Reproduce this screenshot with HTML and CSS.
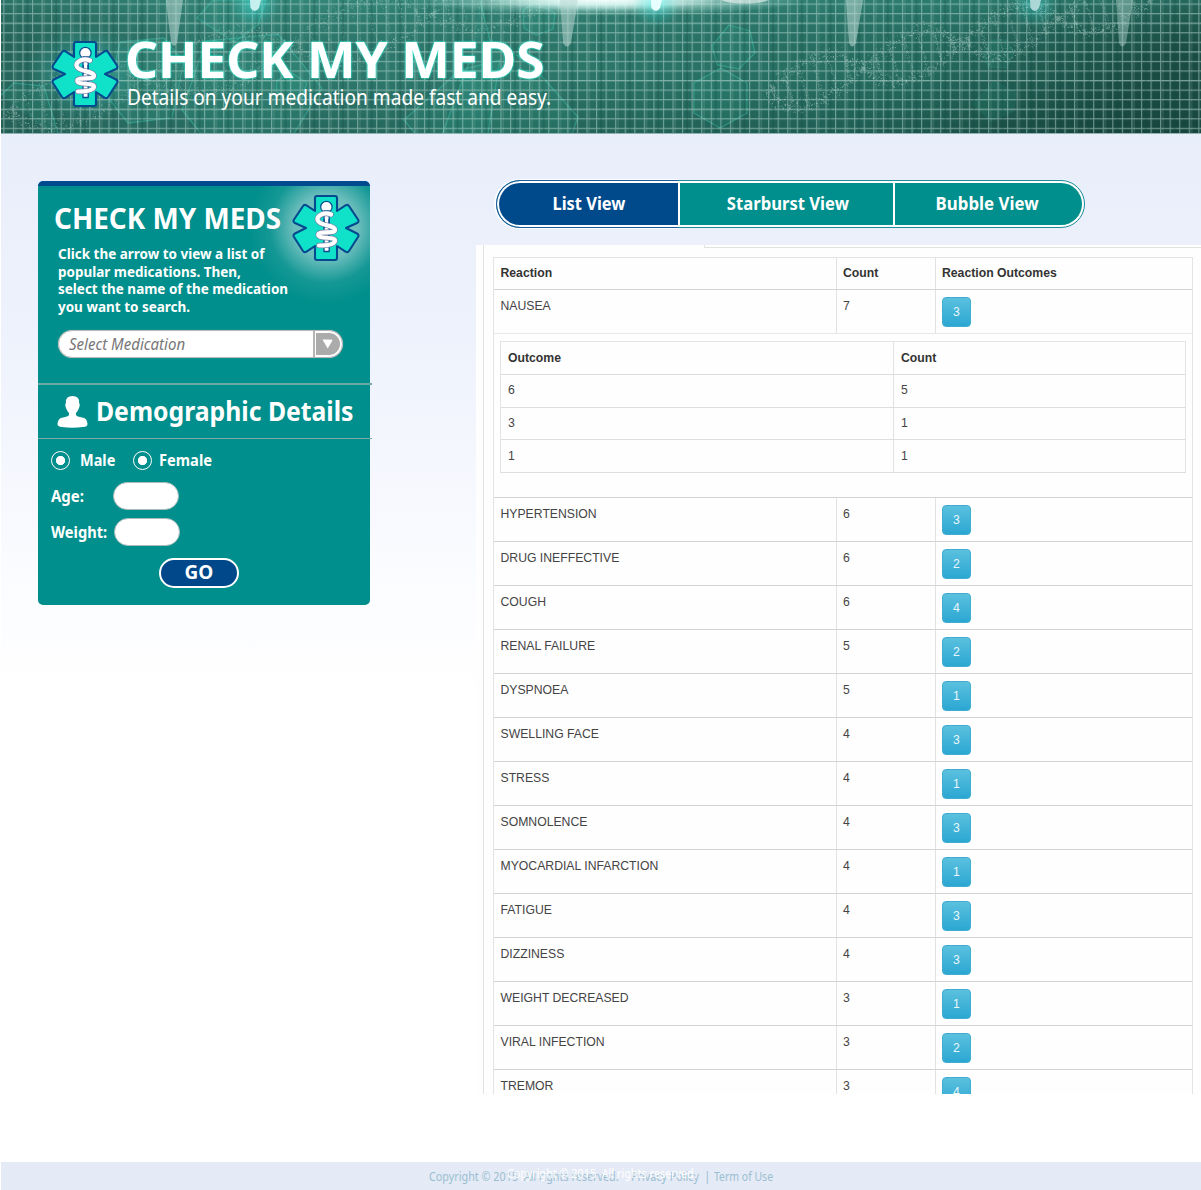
FILE: index.html
```html
<!DOCTYPE html>
<html lang="en">
<head>
<meta charset="utf-8">
<title>Check My Meds</title>
<link rel="stylesheet" href="styles.css">
</head>
<body>
<svg class="defs" width="0" height="0" aria-hidden="true">
  <symbol id="star" viewBox="0 0 68 68">
    <path d="M25 2H43Q45 2 45 4V17L53.5 11.3Q55.8 10 57.2 12.3L66 25.5Q67.3 27.8 65 29L54 34L65 39.5Q67.3 40.8 66 43L57.2 56.7Q55.8 59 53.5 57.7L45 52V64Q45 66 43 66H25Q23 66 23 64V52L14.500 57.7Q12.200 59 10.800 56.7L2 43Q.7 40.800 3 39.500L14 34L3 29Q.7 27.800 2 25.500L10.800 12.300Q12.200 10 14.500 11.300L23 17V4Q23 2 25 2Z" fill="#10e2c9" stroke="#034a8e" stroke-width="2.1" stroke-linejoin="round"/>
    <circle cx="34.400" cy="13" r="5.700" fill="#fff" stroke="#0b4c91" stroke-width="1.200"/>
    <path d="M32 17H37.200V57.500H32Z" fill="#fff" stroke="#0b4c91" stroke-width="1.300"/>
    <path d="M39 20.500C32 17.500 24 22 25.800 26.500C28 32 43.500 31 43 36C42.600 40.500 26 36 26.300 41C26.800 45 43 42.500 43 46.500C43 51 33 51.500 27 51.500" fill="none" stroke="#7480a8" stroke-width="5.600" stroke-linecap="round"/>
    <path d="M32.300 25V34M36.900 25V34M32.300 41V45M36.900 41V45" stroke="#0b4c91" stroke-width="1" fill="none"/>
    <path d="M39 20.500C32 17.500 24 22 25.800 26.500C28 32 43.500 31 43 36C42.600 40.500 26 36 26.300 41C26.800 45 43 42.500 43 46.500C43 51 33 51.500 27 51.500" fill="none" stroke="#fff" stroke-width="4.200" stroke-linecap="round"/>
  </symbol>
</svg>

<header class="banner">
  <svg class="banner-art" width="1200" height="134" viewBox="1 0 1200 134" aria-hidden="true">
    <defs>
      <linearGradient id="base" x1="0" x2="1" y1="0" y2=".1">
        <stop offset="0" stop-color="#245f56"/><stop offset=".2" stop-color="#2f7a6f"/><stop offset=".5" stop-color="#2d776b"/><stop offset=".8" stop-color="#256b60"/><stop offset="1" stop-color="#1a4c44"/>
      </linearGradient>
      <linearGradient id="shade" x1="0" x2="0" y1="0" y2="1">
        <stop offset="0" stop-color="#3fa090" stop-opacity=".3"/><stop offset=".5" stop-color="#164a42" stop-opacity="0"/><stop offset="1" stop-color="#0d302b" stop-opacity=".25"/>
      </linearGradient>
      <radialGradient id="glow"><stop offset="0" stop-color="#59ffff" stop-opacity=".5"/><stop offset="1" stop-color="#2fd5c8" stop-opacity="0"/></radialGradient>
      <radialGradient id="white"><stop offset="0" stop-color="#fff"/><stop offset=".45" stop-color="#e8fffb" stop-opacity=".7"/><stop offset="1" stop-color="#c8fff4" stop-opacity="0"/></radialGradient>
      <pattern id="mesh" width="9.560" height="9.560" patternUnits="userSpaceOnUse" x="3.300" y="3.500">
        <path d="M0 .6H9.560M.6 0V9.560" stroke="#b4d6cf" stroke-opacity=".55" stroke-width="1.100"/>
      </pattern>
      <pattern id="mesh2" width="28.680" height="28.680" patternUnits="userSpaceOnUse" x="14.500" y="22.500">
        <path d="M0 1H28.680M1.200 0V28.680" stroke="#c8e2dc" stroke-opacity=".2"/>
        <path d="M13 0V28.680" stroke="#0d473f" stroke-opacity=".25" stroke-width="2"/>
      </pattern>
    </defs>
    <rect x="1" width="1200" height="134" fill="url(#base)"/>
    <rect x="1" width="1200" height="134" fill="url(#shade)"/>
    <ellipse cx="85" cy="72" rx="58" ry="48" fill="url(#glow)" opacity=".7"/>
    <g fill="#3ad0b4" fill-opacity=".09" stroke="#45cfb8" stroke-opacity=".38" stroke-width="1.300">
      <path d="M120 42L164 38L184 62L172 118L128 123L108 98Z"/>
      <path d="M206 41L278 34L322 88L290 140H206L182 110Z"/>
      <path d="M197 18L213 0H266L258 25L234 42Z"/>
      <path d="M277 80L292 73L307 83L302 98L285 99L276 91Z"/>
      <path d="M480 0L490 40L530 63L578 117L570 140H440L470 60"/>
      <path d="M404 120L460 70L500 60L487 140H420Z"/>
      <path d="M1 95L14 83L44 86L60 140"/>
      <path d="M523 10L535 2L555 13L553 29L536 35L524 28Z"/>
      <path d="M729 25L750 31L755 53L739 69L717 65L712 46Z"/>
      <path d="M721 68L747 83V113L720 128L694 113V83Z"/>
      <path d="M991 40H1007L1014 53L1006 68L988 67L983 54Z" stroke-opacity=".1"/>
      <path d="M994 80L1017 93L1014 112L990 122L972 104Z" stroke-opacity="0"/>
    </g>
    <rect x="1" width="1200" height="134" fill="url(#mesh)"/>
    <rect x="1" width="1200" height="134" fill="url(#mesh2)"/>
    <path class="dna" fill="#cfe9e2" fill-opacity=".42"/>
    <ellipse cx="610" cy="-1" rx="200" ry="17" fill="url(#white)" opacity=".8"/>
    <ellipse cx="600" cy="-2" rx="120" ry="13" fill="url(#white)"/>
    <ellipse cx="745" cy="-1" rx="24" ry="4.500" fill="#fff" opacity=".55"/>
    <g fill="#bad9d3" fill-opacity=".55">
      <path d="M166 0H183L177 43Q174 49 171 43Z"/>
      <path d="M560 0H578L571 43Q567 50 563 43Z"/>
      <path d="M846 0H863L856 43Q852 50 849 43Z"/>
      <path d="M1116 0H1133L1126 43Q1122 50 1119 43Z" fill-opacity=".4"/>
    </g>
    <g>
      <ellipse cx="255" cy="3" rx="24" ry="25" fill="url(#glow)"/>
      <ellipse cx="656" cy="3" rx="24" ry="25" fill="url(#glow)"/>
      <ellipse cx="1035" cy="3" rx="24" ry="25" fill="url(#glow)" opacity=".7"/>
      <path d="M250 0H261L259 8Q255 14 250.500 8Z" fill="#c6f0ee"/>
      <path d="M651 0H662L660 8Q656 14 651.500 8Z" fill="#e8ffff"/>
      <path d="M1030 0H1041L1039 8Q1035 14 1030.500 8Z" fill="#abd8d6"/>
    </g>
    <rect x="1" y="133" width="1200" height="1" fill="#8fb3ae"/>
  </svg>
  <div class="brand">
    <svg class="brand-star" width="68" height="68"><use href="#star"/></svg>
    <div class="brand-text">
      <h1>CHECK MY MEDS</h1>
      <p>Details on your medication made fast and easy.</p>
    </div>
  </div>
</header>

<main class="page">
  <aside class="search">
    <section class="pick">
      <svg class="pick-star" width="68" height="68"><use href="#star"/></svg>
      <h2>CHECK MY MEDS</h2>
      <p>Click the arrow to view a list of<br>popular medications. Then,<br>select the name of the medication<br>you want to search.</p>
      <div class="select">
        <span>Select Medication</span>
        <b class="arrow"><svg width="12" height="9" viewBox="0 0 12 9"><path d="M1 .5H10.500L5.750 8.500Z" fill="#fff"/></svg></b>
      </div>
    </section>
    <section class="demo">
      <svg width="31" height="33" viewBox="0 0 31 33"><path d="M9 8Q8 1.500 15.500 1Q23 1.500 22 8Q23.500 9 22 13Q20.500 17 19 18Q18.500 21 21 21.500L27 23Q30 24 30.500 29Q30.500 32 26 32Q15 33.500 5 32Q.5 31.500 .5 29Q1 24 4 23L10 21.500Q12.500 21 12 18Q10.500 17 9 13Q7.500 9 9 8Z" fill="#fff"/></svg>
      <h3>Demographic Details</h3>
    </section>
    <section class="form">
      <div class="line radios">
        <i class="radio"></i><span class="male">Male</span>
        <i class="radio"></i><span class="female">Female</span>
      </div>
      <div class="line"><span class="lab age">Age:</span><i class="box"></i></div>
      <div class="line"><span class="lab weight">Weight:</span><i class="box shift"></i></div>
      <div class="go">GO</div>
    </section>
  </aside>

  <div class="results">
    <nav class="tabs">
      <a class="tab on"><span>List View</span></a>
      <a class="tab mid"><span>Starburst View</span></a>
      <a class="tab last"><span>Bubble View</span></a>
    </nav>
    <div class="sheet">
      <div class="stub"></div>
      <div class="frame">
        <div class="table">
          <div class="row head"><span>Reaction</span><span>Count</span><span>Reaction Outcomes</span></div>
          <div class="row soft"><span>NAUSEA</span><span>7</span><span><b class="btn">3</b></span></div>
          <div class="nest">
            <div class="inner">
              <div class="irow head"><span>Outcome</span><span>Count</span></div>
              <div class="irow"><span>6</span><span>5</span></div>
              <div class="irow"><span>3</span><span>1</span></div>
              <div class="irow"><span>1</span><span>1</span></div>
            </div>
          </div>
          <div class="row"><span>HYPERTENSION</span><span>6</span><span><b class="btn">3</b></span></div>
          <div class="row"><span>DRUG INEFFECTIVE</span><span>6</span><span><b class="btn">2</b></span></div>
          <div class="row"><span>COUGH</span><span>6</span><span><b class="btn">4</b></span></div>
          <div class="row"><span>RENAL FAILURE</span><span>5</span><span><b class="btn">2</b></span></div>
          <div class="row"><span>DYSPNOEA</span><span>5</span><span><b class="btn">1</b></span></div>
          <div class="row"><span>SWELLING FACE</span><span>4</span><span><b class="btn">3</b></span></div>
          <div class="row"><span>STRESS</span><span>4</span><span><b class="btn">1</b></span></div>
          <div class="row"><span>SOMNOLENCE</span><span>4</span><span><b class="btn">3</b></span></div>
          <div class="row"><span>MYOCARDIAL INFARCTION</span><span>4</span><span><b class="btn">1</b></span></div>
          <div class="row"><span>FATIGUE</span><span>4</span><span><b class="btn">3</b></span></div>
          <div class="row"><span>DIZZINESS</span><span>4</span><span><b class="btn">3</b></span></div>
          <div class="row"><span>WEIGHT DECREASED</span><span>3</span><span><b class="btn">1</b></span></div>
          <div class="row"><span>VIRAL INFECTION</span><span>3</span><span><b class="btn">2</b></span></div>
          <div class="row"><span>TREMOR</span><span>3</span><span><b class="btn">4</b></span></div>
        </div>
      </div>
    </div>
  </div>
</main>

<footer class="foot">
  <div class="links"><span class="copy">Copyright © 2015&nbsp; All rights reserved.</span><span class="policy">Privacy Policy</span><span class="bar">|</span><span class="term">Term of Use</span></div>
  <div class="over"><span class="copy">Copyright © 2015&nbsp; All rights reserved.</span></div>
</footer>
<script src="dna.js"></script>
</body>
</html>
```
FILE: dna.js
```js
// Scatters small particles along two double-helix strands in the banner.
(function () {
  var seed = 7;
  function rnd() { seed = (seed * 16807) % 2147483647; return seed / 2147483647; }
  var d = '';
  function dot(x, y, s) { d += 'M' + x.toFixed(1) + ' ' + y.toFixed(1) + 'h' + s + 'v' + s + 'h-' + s + 'z'; }
  function helix(x0, x1, y0, slope, period, amp, step, rung) {
    for (var x = x0; x < x1; x += step) {
      var mid = y0 + slope * (x - x0);
      var off = Math.sin((x - x0) / period * Math.PI) * amp;
      for (var s = -1; s < 2; s += 2) {
        var spread = (rnd() + rnd() + rnd() - 1.5) * 7;
        dot(x + (rnd() - 0.5) * 5 + s * off * -0.25, mid + s * off + spread, rnd() < 0.25 ? 1.2 : 0.8);
      }
    }
    for (var r = x0 + 8; r < x1; r += 15) {
      var o = Math.abs(Math.sin((r - x0) / period * Math.PI) * amp);
      for (var t = -1; t < 1; t += rung) {
        dot(r + t * o * 0.28 + (rnd() - 0.5) * 3.5, y0 + slope * (r - x0) + t * o + (rnd() - 0.5) * 3, 0.7);
      }
    }
  }
  helix(765, 1155, 93, -0.255, 98, 25, 0.5, 0.028);
  helix(5, 560, 112, -0.23, 142, 30, 0.85, 0.07);
  document.querySelector('.dna').setAttribute('d', d);
})();
```
FILE: styles.css
```css
* { box-sizing: border-box; }
body { margin: 0; width: 1201px; height: 1190px; overflow: hidden; display: flex; flex-direction: column; background: #fff; font-family: "Noto Sans", sans-serif; color: #fff; }
h1, h2, h3, p { margin: 0; }
.defs { position: absolute; }
h1, h2, h3, .brand p, .pick p, .select span, .radios span, .lab, .tab span, .foot span { display: inline-block; white-space: nowrap; transform-origin: 0 50%; }

.banner { position: relative; height: 134px; margin-left: 1px; }
.banner-art { position: absolute; left: 0; top: 0; display: block; }
.brand { position: relative; display: flex; padding: 40px 0 0 50px; }
.brand-text { display: flex; flex-direction: column; align-items: flex-start; padding-left: 8px; margin-top: -10px; }
h1 { font-size: 50px; line-height: 58px; font-weight: 700; transform: scaleX(1.03); margin-left: -2px; text-shadow: 0 0 2px #35eed6, 0 0 2px #35eed6; }
.brand p { font-size: 22px; line-height: 26px; transform: scaleX(.868); margin-top: -5px; }

.page { height: 1028px; margin-left: 1px; display: flex; background: linear-gradient(#e8eefa, #eef2fc 200px, #fbfcff 450px, #fff 565px); }
.search { width: 332px; height: 424px; margin: 47px 0 0 37px; border-radius: 5px; background: #008f8c; border-top: 5px solid #004a8f; }
.pick { position: relative; height: 197px; padding: 15px 0 0 20px; background: radial-gradient(circle at 288px 41px, rgba(255,255,255,.5) 0, rgba(255,255,255,.42) 32px, rgba(255,255,255,.08) 56px, transparent 78px); }
.pick-star { position: absolute; left: 254px; top: 8px; }
h2 { font-size: 28px; line-height: 34px; transform: scaleX(.995); margin-left: -4px; }
.pick > p { font-size: 14px; line-height: 17.7px; font-weight: 700; transform: scaleX(.963); margin-top: 10px; }
.select { width: 285px; height: 28px; margin-top: 13px; border: 1px solid #b5b5b5; border-radius: 14px; background: #fff; display: flex; justify-content: space-between; padding-left: 10px; box-shadow: 0 0 1px #bbb; }
.select span { font-size: 16px; line-height: 26px; font-style: italic; color: #777; transform: scaleX(.938); }
.arrow { width: 29px; border-left: 2px solid #b5b5b5; padding: 2px 2px 2px 1px; display: flex; }
.arrow svg { width: 100%; height: 22px; padding: 6px 5px; background: #ababab; border-radius: 0 11px 11px 0; }
.demo { height: 56px; border-top: 2px solid #6ca8a5; border-bottom: 1px solid #7ba9a6; display: flex; padding: 10px 0 0 19px; width: 334px; }
.demo h3 { font-size: 26px; line-height: 34px; transform: scaleX(.952); margin: -1px 0 0 8px; }
.form { padding: 3px 0 0 13px; display: flex; flex-direction: column; }
.line { height: 36px; display: flex; align-items: center; font-size: 15.5px; font-weight: 700; }
.radio { width: 19px; height: 19px; border: 1.5px solid #fff; border-radius: 50%; background: radial-gradient(circle, #fff 4.3px, transparent 5px); }
.male { width: 53px; margin-left: 10px; transform: scaleX(.935); }
.female { margin-left: 7px; transform: scaleX(.946); }
.lab { width: 62px; }
.age { transform: scaleX(.965); }
.weight { transform: scaleX(.943); }
.box { width: 66px; height: 28px; background: #fff; border: 1px solid #a8bcbc; border-radius: 14px; }
.shift { margin-left: 1px; }
.go { width: 80px; height: 30px; margin: 8px 0 0 108px; border: 2px solid #fff; border-radius: 15px; background: #00488a; text-align: center; font-size: 19px; line-height: 25px; font-weight: 700; }

.results { width: 725px; margin: 46px 0 0 106px; display: flex; flex-direction: column; }
.tabs { width: 589px; height: 48px; margin-left: 20px; border: 1px solid #1d8d9a; border-radius: 24px; padding: 2px; display: flex; gap: 2px; background: #fff; }
.tab { display: flex; align-items: center; justify-content: center; height: 42px; background: #008f8c; }
.tab span { font-size: 18px; line-height: 40px; margin-top: -2px; font-weight: 700; transform-origin: 50% 50%; }
.on { position: relative; width: 179px; border-radius: 21px 0 0 21px; background: #004a8c; }
.on::before { content: ""; position: absolute; inset: -3px 0 -3px -3px; border: 1px solid #1a5b9a; border-right: 0; border-radius: 24px 0 0 24px; box-shadow: -1px 0 0 1px rgba(255,255,255,.85); clip-path: inset(-3px 0 -3px -3px); }
.on span { transform: scaleX(.914); }
.mid { width: 213px; }
.mid span { transform: scaleX(.924); padding-left: 4px; }
.last { flex: 1; border-radius: 0 21px 21px 0; }
.last span { transform: scaleX(.936); padding-right: 3px; }

.sheet { height: 849px; margin-top: 17px; overflow: hidden; background: #fefefe; color: #444; font: 12.22px/16px "Liberation Sans", sans-serif; }
.stub { height: 3px; margin-left: 228px; border: solid #e2e2e2; border-width: 0 0 1px 1px; }
.frame { margin: -3px 0 0 7px; border-left: 1px solid #e2e2e2; padding: 12px 0 0 9px; }
.table { width: 700px; border: 1px solid #e4e4e4; }
.row { height: 44px; display: grid; grid-template-columns: 342px 99px 1fr; border-bottom: 1px solid #d4d4d4; }
.row > span { padding: 8px 6px 0 6.5px; }
.row > span + span { border-left: 1px solid #e2e2e2; padding-left: 6px; }
.row.head { height: 32px; }
.row.soft { border-color: #e8e8e8; }
.head { font-weight: 700; color: #333; }
.row.head > span { padding-top: 7px; }
.btn { display: block; width: 29px; height: 30px; margin: -1px 0 0 0; border-radius: 4px; background: linear-gradient(#5bc0de, #2ba7d2); border: 1px solid #3fadd0; color: #e8f7fc; font-weight: 400; line-height: 28px; text-align: center; }
.nest { height: 164px; padding: 7px 6px; border-bottom: 1px solid #d4d4d4; }
.inner { width: 686px; border: 1px solid #e4e4e4; border-bottom: 0; }
.irow { height: 32.75px; display: grid; grid-template-columns: 392px 1fr; border-bottom: 1px solid #ddd; }
.irow > span { padding: 7.5px 7px 0; }
.irow > span + span { border-left: 1px solid #e2e2e2; }

.foot { position: relative; height: 28px; margin-left: 1px; background: #e4eaf6; font-size: 12px; line-height: 16px; }
.links { display: flex; padding: 7px 0 0 428px; color: #9bbfd0; }
.copy { width: 202px; transform: scaleX(.9); }
.policy { width: 73px; transform: scaleX(.898); }
.bar { width: 10px; }
.term { transform: scaleX(.872); }
.over { position: absolute; left: 506px; top: 4px; color: #fff; }
```
